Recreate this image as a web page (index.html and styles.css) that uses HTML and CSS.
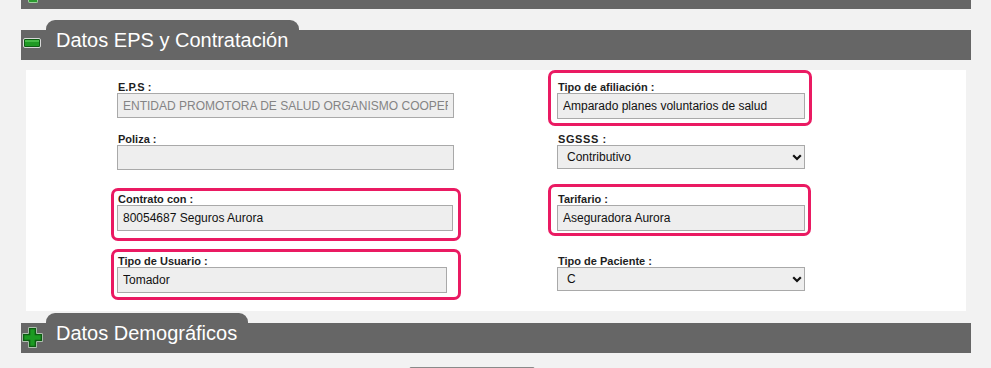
FILE: index.html
```html
<!DOCTYPE html>
<html lang="es">
<head>
    <meta charset="UTF-8">
    <meta name="viewport" content="width=device-width, initial-scale=1.0">
    <title>Datos EPS y Contratación</title>
    <link rel="stylesheet" href="styles.css">
</head>
<body>
  <div class="page">
    <div class="bar-end"><span class="bar-end-icon"></span></div>

    <div class="section-head">
        <svg class="toggle toggle-minus" width="18" height="10" viewBox="0 0 18 10">
            <rect x="0.5" y="0.5" width="17" height="9" rx="1.5" fill="#0d5c12" stroke="#d8d8d8"/>
            <rect x="2" y="2" width="14" height="6" fill="#1f9a24"/>
            <rect x="2" y="2" width="14" height="2" fill="#46bb47"/>
        </svg>
        <h2 class="section-title">Datos EPS y Contratación</h2>
    </div>

    <div class="panel">
        <div class="form-grid">
            <div class="field">
                <label>E.P.S :</label>
                <input class="input wide disabled" type="text" value="ENTIDAD PROMOTORA DE SALUD ORGANISMO COOPERATIVO SALUDCOOP" readonly>
            </div>
            <div class="field mark mark-afil">
                <label>Tipo de afiliación :</label>
                <input class="input narrow" type="text" value="Amparado planes voluntarios de salud">
            </div>

            <div class="field">
                <label>Poliza :</label>
                <input class="input wide short" type="text" value="">
            </div>
            <div class="field">
                <label class="spaced">SGSSS :</label>
                <div class="select-wrap">
                    <select class="select">
                        <option>Contributivo</option>
                        <option>Subsidiado</option>
                    </select>
                    <svg class="chevron" width="10" height="7" viewBox="0 0 10 7"><path d="M1.2 1.2 5 5 8.8 1.2" fill="none" stroke="#111" stroke-width="2.2"/></svg>
                </div>
            </div>

            <div class="field mark mark-contrato lower">
                <label>Contrato con :</label>
                <input class="input wide contrato" type="text" value="80054687 Seguros Aurora">
            </div>
            <div class="field mark mark-tarifa lower">
                <label>Tarifario :</label>
                <input class="input narrow" type="text" value="Aseguradora Aurora">
            </div>

            <div class="field mark mark-usuario low">
                <label>Tipo de Usuario :</label>
                <input class="input usuario" type="text" value="Tomador">
            </div>
            <div class="field low">
                <label>Tipo de Paciente :</label>
                <div class="select-wrap">
                    <select class="select">
                        <option>C</option>
                        <option>B</option>
                        <option>A</option>
                    </select>
                    <svg class="chevron" width="10" height="7" viewBox="0 0 10 7"><path d="M1.2 1.2 5 5 8.8 1.2" fill="none" stroke="#111" stroke-width="2.2"/></svg>
                </div>
            </div>
        </div>
    </div>

    <div class="section-head second">
        <svg class="toggle toggle-plus" width="21" height="21" viewBox="0 0 21 21">
            <path d="M7.5 1.5h6v6h6v6h-6v6h-6v-6h-6v-6h6z" fill="none" stroke="#e4e4e4" stroke-width="3" stroke-linejoin="round"/>
            <path d="M7.5 1.5h6v6h6v6h-6v6h-6v-6h-6v-6h6z" fill="#1c9a22" stroke="#0d5c12" stroke-width="1.6"/>
        </svg>
        <h2 class="section-title">Datos Demográficos</h2>
    </div>

    <div class="footer-btn"></div>
  </div>
</body>
</html>
```

FILE: styles.css
```css
body {
    margin: 0;
    background-color: #f2f2f2;
    font-family: "Liberation Sans", Arial, sans-serif;
    overflow: hidden;
}
.page {
    width: 950px;
    margin-left: 21px;
}
.bar-end {
    height: 9px;
    background-color: #666666;
}
.bar-end-icon {
    display: block;
    width: 8px;
    height: 2px;
    margin-left: 7px;
    background-color: #2c9a30;
    border: 1px solid #9fd29f;
    border-top: none;
    border-radius: 0 0 2px 2px;
}
.section-head {
    display: flex;
    align-items: flex-start;
    height: 40px;
    margin-top: 11px;
    background: linear-gradient(to bottom, transparent 10px, #666666 10px);
}
.section-head.second {
    margin-top: 2px;
}
.toggle {
    flex: none;
    display: block;
}
.toggle-minus {
    margin: 18px 5px 0 2px;
}
.toggle-plus {
    margin: 14px 4px 0 1px;
}
.section-title {
    margin: 0;
    padding: 0 11px 0 10px;
    height: 40px;
    line-height: 40px;
    font-size: 20px;
    font-weight: normal;
    color: #ffffff;
    background-color: #666666;
    border-radius: 9px 9px 0 0;
    white-space: nowrap;
}
.toggle-plus + .section-title {
    margin-left: -1px;
}
.panel {
    margin: 10px 5px 0 5px;
    padding: 11px 0 18px 91px;
    background-color: #ffffff;
}
.form-grid {
    display: grid;
    grid-template-columns: 440px 1fr;
    row-gap: 14px;
    align-items: start;
}
.field {
    position: relative;
    width: fit-content;
}
.field.lower {
    margin-top: 9px;
}
.field.low {
    margin-top: 10px;
}
.field label {
    display: block;
    height: 12px;
    line-height: 12px;
    padding-left: 1px;
    font-size: 11px;
    font-weight: bold;
    color: #1e1e1e;
}
.field label.spaced {
    letter-spacing: 0.6px;
}
.input {
    display: block;
    box-sizing: border-box;
    height: 26px;
    margin: 0;
    padding: 0 5px;
    border: 1px solid #a9a9a9;
    background-color: #eeeeee;
    font-family: "Liberation Sans", Arial, sans-serif;
    font-size: 12px;
    color: #111111;
    outline: none;
}
.input.wide {
    width: 337px;
}
.input.short {
    height: 25px;
}
.input.contrato {
    width: 336px;
}
.input.usuario {
    width: 330px;
}
.input.narrow {
    width: 248px;
}
.input.disabled {
    height: 25px;
    color: #848484;
}
.select-wrap {
    position: relative;
    width: 248px;
}
.select {
    display: block;
    box-sizing: border-box;
    width: 248px;
    height: 24px;
    margin: 0;
    padding: 0 0 0 9px;
    border: 1px solid #a9a9a9;
    border-radius: 0;
    background-color: #eeeeee;
    font-family: "Liberation Sans", Arial, sans-serif;
    font-size: 12px;
    color: #111111;
    appearance: none;
    -webkit-appearance: none;
    outline: none;
}
.chevron {
    position: absolute;
    right: 3px;
    top: 9px;
    pointer-events: none;
}
.mark::after {
    content: "";
    position: absolute;
    border: 3px solid #ea1a62;
    border-radius: 7px;
    pointer-events: none;
}
.mark-afil::after {
    top: -11px;
    right: -7px;
    bottom: -7px;
    left: -9px;
}
.mark-tarifa::after {
    top: -9px;
    right: -6px;
    bottom: -5px;
    left: -9px;
}
.mark-contrato::after {
    top: -5px;
    right: -8px;
    bottom: -10px;
    left: -6px;
}
.mark-usuario::after {
    top: -6px;
    right: -14px;
    bottom: -7px;
    left: -6px;
}
.footer-btn {
    width: 124px;
    height: 20px;
    margin: 14px 0 0 388px;
    border: 1px solid #8a8a8a;
    border-radius: 2px;
    background-color: #e1e1e1;
}
```
